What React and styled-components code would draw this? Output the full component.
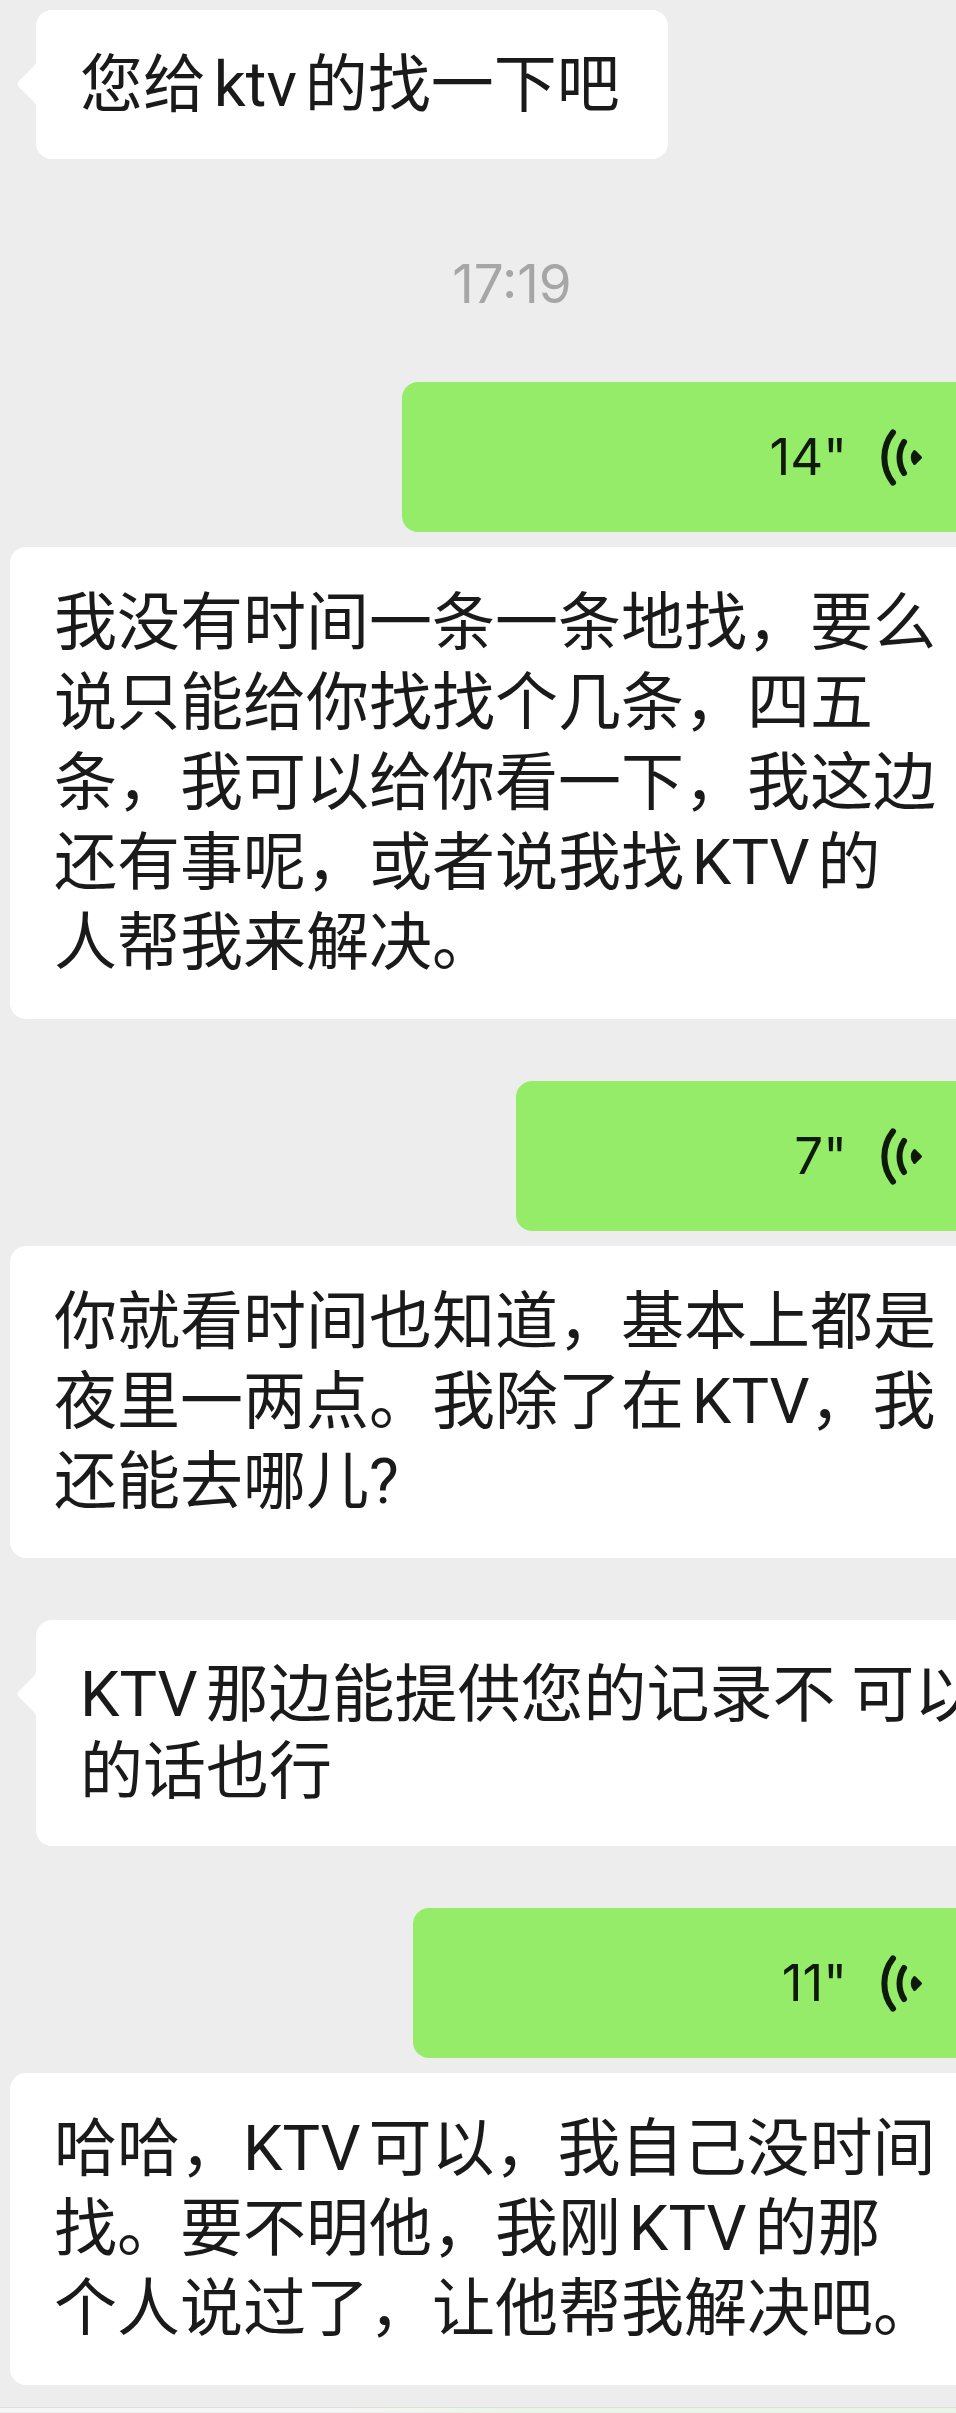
import React from 'react';
import styled, { createGlobalStyle } from 'styled-components';

const GlobalStyle = createGlobalStyle`
  * {
    box-sizing: border-box;
  }

  body {
    margin: 0;
    background-color: #ededed;
    overflow-x: hidden;
  }
`;

const Chat = styled.main`
  display: flex;
  flex-direction: column;
  padding: 10px 0 22px;
  overflow: hidden;
  background-color: #ededed;
  font-family: Roboto, 'Noto Sans CJK SC', sans-serif;
`;

const Time = styled.time`
  padding: 95px 0 68px 68px;
  color: #a6a6a6;
  font-family: Inter, sans-serif;
  font-size: 53px;
  line-height: 60px;
  text-align: center;
`;

const Text = styled.p`
  margin: 0;
  padding: 36px 48px 36px 44px;
  background-color: #ffffff;
  color: #1a1a1a;
  font-size: 63px;
  text-autospace: normal;
  white-space: pre;
`;

const Message = styled(Text)`
  position: relative;
  align-self: ${(props) => (props.$wide ? 'stretch' : 'flex-start')};
  margin-left: 36px;
  border-radius: ${(props) => (props.$wide ? '16px 0 0 16px' : '16px')};
  line-height: 77px;
`;

const Transcript = styled(Text)`
  margin: 15px 0 0 10px;
  border-radius: 16px 0 0 16px;
  line-height: 80px;
`;

const Tight = styled.span`
  text-autospace: no-autospace;
`;

const Tail = styled.svg`
  position: absolute;
  top: 50px;
  left: -20px;
  width: 21px;
  height: 48px;
  fill: #ffffff;
`;

const Exchange = styled.section`
  display: flex;
  flex-direction: column;
  margin-bottom: ${(props) => (props.$last ? '0' : '62px')};
`;

const Voice = styled.button`
  display: flex;
  align-items: center;
  justify-content: flex-end;
  align-self: flex-end;
  gap: 33px;
  width: ${(props) => props.$width}px;
  max-width: 100%;
  height: 150px;
  padding: 0 33px 0 0;
  border: 0;
  border-radius: 16px 0 0 16px;
  background-color: #95ec69;
  color: #0f1a0b;
  font-family: Inter, sans-serif;
  font-size: 51px;
  line-height: 60px;
`;

const WaveIcon = styled.svg`
  width: 43px;
  height: 59px;
  fill: none;
  stroke: currentColor;
  stroke-linecap: round;
  stroke-width: 6;
`;

const Footer = styled.footer`
  height: 5px;
  border-top: 1px solid #dedfdc;
  background: linear-gradient(to right, #f6f6f6 35%, #eaf5e4 55%);
`;

const IncomingMessage = ({ children, wide }) => (
  <Message $wide={wide}>
    <Tail viewBox="0 0 21 48" aria-hidden="true">
      <path d="M21 0C20 4 18 6 15 9L3 21C1 23 1 25 3 27L15 39C18 42 20 44 21 48Z" />
    </Tail>
    {children}
  </Message>
);

const VoiceMessage = ({ seconds, width }) => (
  <Voice type="button" $width={width}>
    <span>{seconds}"</span>
    <WaveIcon viewBox="0 0 43 59" aria-hidden="true">
      <path d="M13 4.3A41 41 0 0 0 13 54.7" />
      <path d="M24 14A29 29 0 0 0 24 45" />
      <path
        d="M34.5 23.5C31.5 27 31.5 32 34.5 35.5L40.5 29.5Z"
        fill="currentColor"
        strokeWidth="3"
        strokeLinejoin="round"
      />
    </WaveIcon>
  </Voice>
);

const App = () => {
  return (
    <>
      <GlobalStyle />
      <Chat lang="zh-CN">
        <IncomingMessage>您给ktv的找一下吧</IncomingMessage>
        <Time>17:19</Time>

        <Exchange>
          <VoiceMessage seconds={14} width={554} />
          <Transcript>
            {`我没有时间一条一条地找，要么
说只能给你找找个几条，四五
条，我可以给你看一下，我这边
还有事呢，或者说我找KTV的
人帮我来解决。`}
          </Transcript>
        </Exchange>

        <Exchange>
          <VoiceMessage seconds={7} width={440} />
          <Transcript>
            {`你就看时间也知道，基本上都是
夜里一两点。我除了在KTV，我
`}
            <Tight>还能去哪儿?</Tight>
          </Transcript>
        </Exchange>

        <Exchange>
          <IncomingMessage wide>
            {`KTV那边能提供您的记录不 可以
的话也行`}
          </IncomingMessage>
        </Exchange>

        <Exchange $last>
          <VoiceMessage seconds={11} width={543} />
          <Transcript>
            {`哈哈，KTV可以，我自己没时间
找。要不明他，我刚KTV的那
个人说过了，让他帮我解决吧。`}
          </Transcript>
        </Exchange>
      </Chat>
      <Footer />
    </>
  );
};

export default App;
